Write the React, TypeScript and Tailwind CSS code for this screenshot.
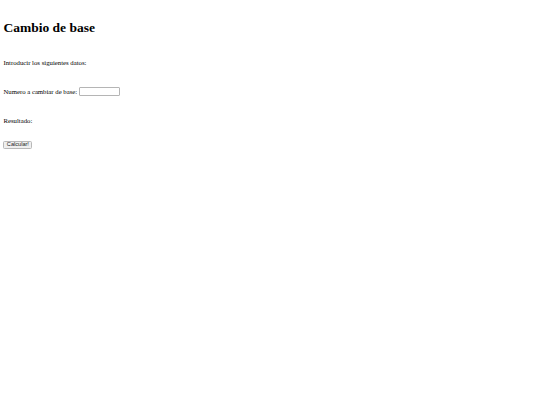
export default function App() {
  return (
    <div className="min-h-[405px] w-[540px] bg-white pl-[3.4px] text-black [font-family:'Liberation_Serif',serif]">
      <h1 className="mt-[20px] h-[15px] text-[13.5px] font-bold leading-[15px]">Cambio de base</h1>
      <p className="mt-[24px] h-[8px] text-[6.75px] leading-[8px]">Introducir los siguientes datos:</p>
      <div className="mt-[20px] flex h-[9px] items-center text-[6.75px] leading-[8px]">
        <span>Numero a cambiar de base:</span>
        <input
          type="text"
          className="ml-[1.8px] h-[9px] w-[41px] rounded-[1px] border border-[#b5b5b5] bg-white outline-none"
        />
      </div>
      <p className="mt-[21px] h-[8px] text-[6.75px] leading-[8px]">Resultado:</p>
      <button
        type="button"
        className="mt-[16px] flex h-[8px] w-[29px] items-center justify-center rounded-[1.5px] border border-[#b8b8b8] bg-[#efefef] text-[5.6px] leading-none text-[#222] [font-family:'Liberation_Sans',sans-serif]"
      >
        Calcular!
      </button>
    </div>
  );
}
